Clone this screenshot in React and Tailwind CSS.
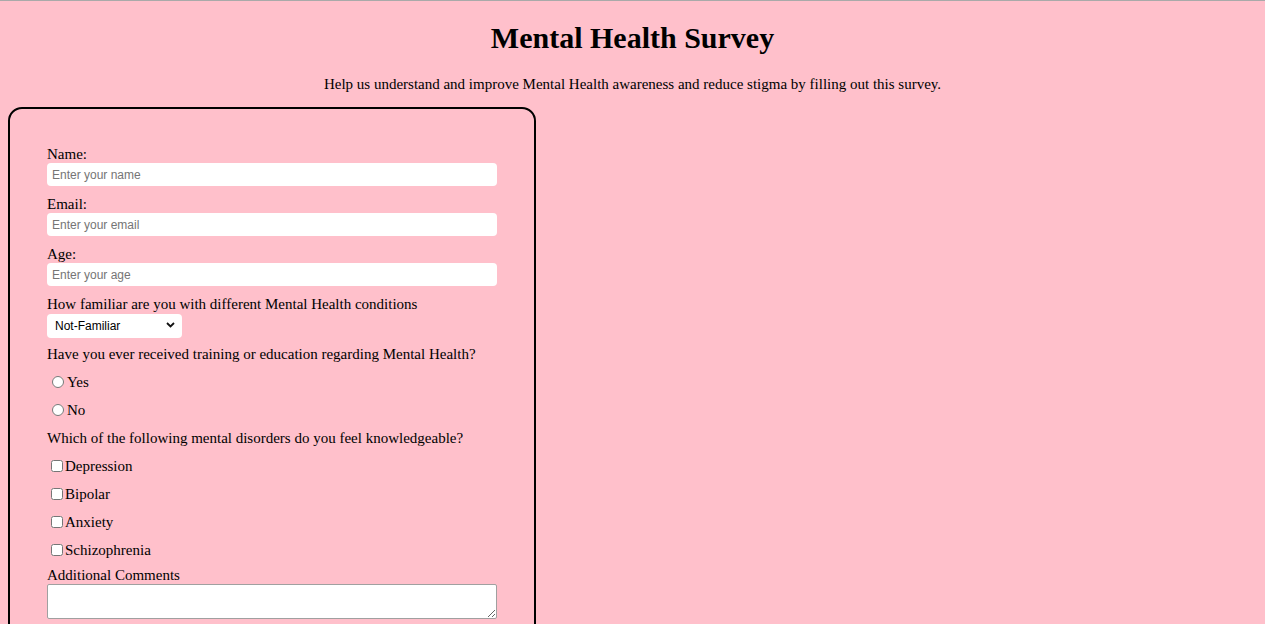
import React from "react";

const serif = { fontFamily: '"Liberation Serif", "Times New Roman", serif' };

function TextField({ label, placeholder, type = "text" }) {
  return (
    <div className="mb-[10px]">
      <label className="block text-[15px] leading-[17px]">{label}</label>
      <input
        type={type}
        placeholder={placeholder}
        className="block w-[450px] h-[23px] bg-white rounded-[4px] px-[5px] text-[12px] text-black placeholder:text-[#757575] outline-none font-['Liberation_Sans',Arial,sans-serif]"
      />
    </div>
  );
}

function Row({ children }) {
  return <div className="h-[28px] flex items-center text-[15px]">{children}</div>;
}

export default function App() {
  return (
    <div className="min-h-[624px] bg-[#ffc0cb] border-t border-[#a9a9a9] text-black pb-6" style={serif}>
      <h1 className="text-center font-bold text-[30px] leading-[34px] pt-[20px]">Mental Health Survey</h1>
      <p className="text-center text-[15px] leading-[17px] mt-[21px]">
        Help us understand and improve Mental Health awareness and reduce stigma by filling out this survey.
      </p>
      <form className="ml-[8px] mt-[14px] w-[528px] border-2 border-black rounded-[14px] pl-[37px] pt-[37px] pb-6">
        <TextField label="Name:" placeholder="Enter your name" />
        <TextField label="Email:" placeholder="Enter your email" type="email" />
        <TextField label="Age:" placeholder="Enter your age" />
        <div>
          <label className="block text-[15px] leading-[17px]">How familiar are you with different Mental Health conditions</label>
          <div className="relative w-[135px] h-[24px] mb-[3px]">
            <select className="appearance-none w-full h-full bg-white rounded-[4px] pl-[8px] text-[12px] outline-none font-['Liberation_Sans',Arial,sans-serif]">
              <option>Not-Familiar</option>
              <option>Somewhat Familiar</option>
              <option>Very Familiar</option>
            </select>
            <svg className="absolute right-[7px] top-[9px] pointer-events-none" width="9" height="6" viewBox="0 0 9 6">
              <path d="M1 1l3.5 3.5L8 1" fill="none" stroke="#111" strokeWidth="1.8" />
            </svg>
          </div>
        </div>
        <Row>Have you ever received training or education regarding Mental Health?</Row>
        <Row>
          <input type="radio" name="training" className="ml-[5px] mr-[3px] w-[12px] h-[12px]" />
          Yes
        </Row>
        <Row>
          <input type="radio" name="training" className="ml-[5px] mr-[3px] w-[12px] h-[12px]" />
          No
        </Row>
        <Row>Which of the following mental disorders do you feel knowledgeable?</Row>
        {["Depression", "Bipolar", "Anxiety", "Schizophrenia"].map((d) => (
          <Row key={d}>
            <input type="checkbox" className="ml-[4px] mr-[2px] w-[12px] h-[12px]" />
            {d}
          </Row>
        ))}
        <label className="block text-[15px] leading-[17px] mt-[3px]">Additional Comments</label>
        <textarea className="block w-[450px] h-[35px] bg-white border border-[#a0a0a0] rounded-[2px]" />
      </form>
    </div>
  );
}
